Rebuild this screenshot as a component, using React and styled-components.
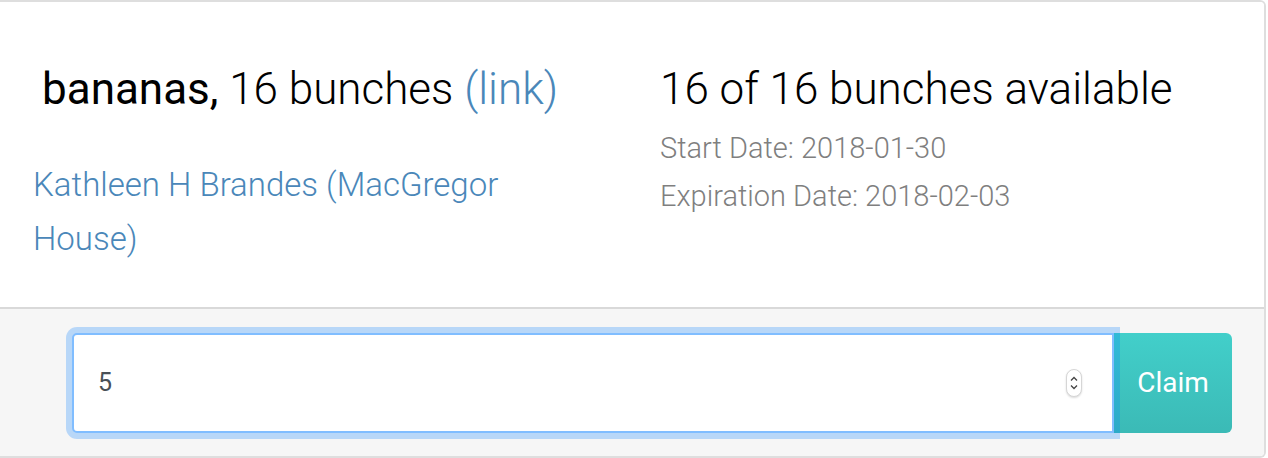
import React from "react"
import styled, { createGlobalStyle } from "styled-components"

const GlobalStyle = createGlobalStyle`
  html, body {
    margin: 0;
    padding: 0;
    background: #fff;
    font-family: Roboto, "Liberation Sans", sans-serif;
  }
`

const Card = styled.div`
  box-sizing: border-box;
  width: 1266px;
  height: 458px;
  display: flex;
  flex-direction: column;
  border: 2px solid #dedede;
  border-left: none;
  border-radius: 0 6px 6px 0;
  overflow: hidden;
`

const Body = styled.div`
  flex: 1;
  display: grid;
  grid-template-columns: 540px 1fr;
  column-gap: 87px;
  padding: 62px 0 0 33px;
  background: #fff;
`

const Column = styled.div`
  display: flex;
  flex-direction: column;
`

const Title = styled.h2`
  margin: 0;
  padding-left: ${(p) => (p.$indent ? "9px" : "0")};
  font-size: 44px;
  line-height: 50px;
  font-weight: 300;
  color: #000;
  white-space: nowrap;
`

const Item = styled.span`
  font-weight: 400;
`

const Link = styled.a`
  color: #4a87b9;
  text-decoration: none;
`

const Owner = styled.a`
  margin-top: 44px;
  font-size: 33px;
  line-height: 54px;
  font-weight: 300;
  color: #4a87b9;
  text-decoration: none;
`

const Dates = styled.div`
  margin-top: 10px;
  display: flex;
  flex-direction: column;
`

const DateLine = styled.div`
  font-size: 29px;
  line-height: 48px;
  font-weight: 300;
  color: #7f7f7f;
`

const Footer = styled.form`
  display: flex;
  align-items: center;
  height: 149px;
  box-sizing: border-box;
  padding: 0 32px 0 72px;
  background: #f6f6f6;
  border-top: 2px solid #d9d9d9;
`

const Field = styled.div`
  position: relative;
  z-index: 1;
  flex: 1;
  box-sizing: border-box;
  height: 100px;
  display: flex;
  align-items: center;
  padding: 0 30px 0 24px;
  background: #fff;
  border: 2px solid #80bdff;
  border-radius: 5px 0 0 5px;
  box-shadow: 0 0 0 6px rgba(0, 123, 255, 0.25);
`

const NumberInput = styled.input`
  flex: 1;
  border: none;
  outline: none;
  background: transparent;
  padding: 0;
  font-family: Roboto, "Liberation Sans", sans-serif;
  font-size: 25px;
  color: #495057;
`

const Spinner = styled.span`
  box-sizing: border-box;
  width: 16px;
  height: 28px;
  display: flex;
  align-items: center;
  justify-content: center;
  border: 1px solid #d6d6d6;
  border-radius: 8px;
  background: #fff;
  box-shadow: 0 1px 2px rgba(0, 0, 0, 0.15);
`

const ClaimButton = styled.button`
  width: 118px;
  height: 100px;
  border: none;
  border-radius: 0 6px 6px 0;
  background: linear-gradient(#42cfca, #3bbab6);
  color: #fff;
  font-family: Roboto, "Liberation Sans", sans-serif;
  font-size: 28px;
  font-weight: 400;
  padding: 0;
  cursor: pointer;
`

const SpinnerIcon = () => (
  <svg width="10" height="20" viewBox="0 0 10 20">
    <path d="M2 7.5 L5 4.5 L8 7.5" fill="none" stroke="#444" strokeWidth="1.3" />
    <path d="M2 12.5 L5 15.5 L8 12.5" fill="none" stroke="#444" strokeWidth="1.3" />
  </svg>
)

const App = () => (
  <>
    <GlobalStyle />
    <Card>
      <Body>
        <Column>
          <Title $indent>
            <Item>bananas,</Item> 16 bunches <Link href="#">(link)</Link>
          </Title>
          <Owner href="#">Kathleen H Brandes (MacGregor House)</Owner>
        </Column>
        <Column>
          <Title>16 of 16 bunches available</Title>
          <Dates>
            <DateLine>Start Date: 2018-01-30</DateLine>
            <DateLine>Expiration Date: 2018-02-03</DateLine>
          </Dates>
        </Column>
      </Body>
      <Footer onSubmit={(e) => e.preventDefault()}>
        <Field>
          <NumberInput type="text" defaultValue="5" />
          <Spinner>
            <SpinnerIcon />
          </Spinner>
        </Field>
        <ClaimButton type="submit">Claim</ClaimButton>
      </Footer>
    </Card>
  </>
)

export default App
